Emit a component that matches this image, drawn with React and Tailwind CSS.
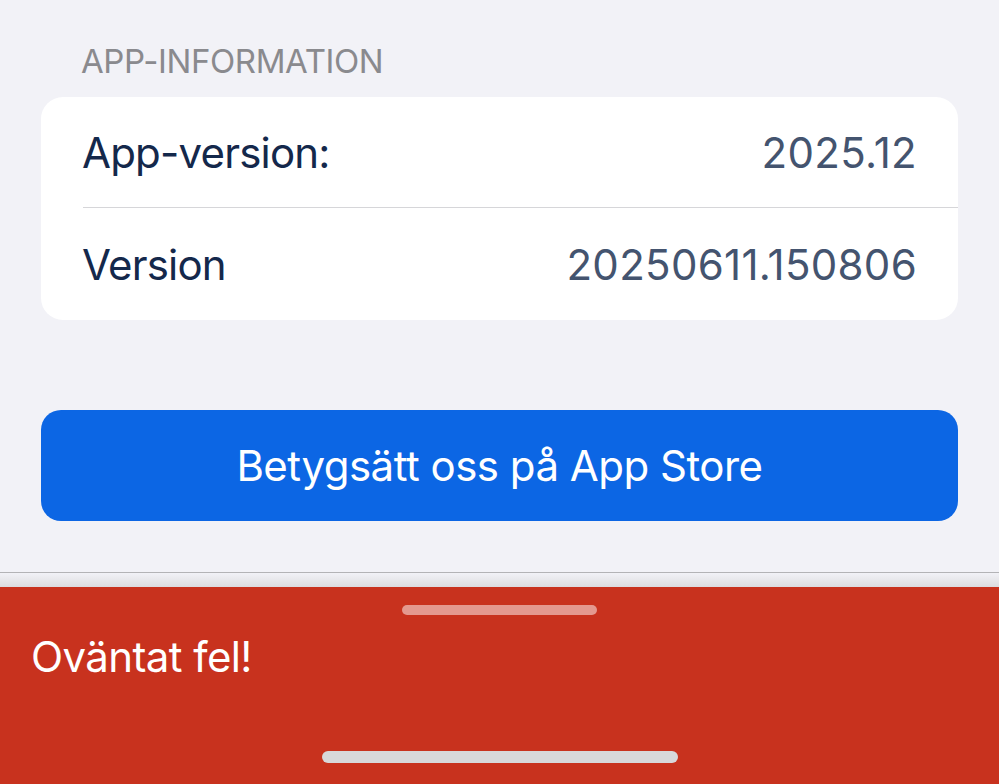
import React from 'react';

const rows = [
  { label: 'App-version:', value: '2025.12' },
  { label: 'Version', value: '20250611.150806' },
];

export default function App() {
  return (
    <div className="h-[784px] w-full overflow-hidden bg-[#f2f2f7] flex flex-col font-['Inter',sans-serif]">
      {/* Settings content */}
      <div className="px-[41px] pt-[41px]">
        <h2 className="pl-[40px] h-[40px] leading-[40px] text-[33px] tracking-[-0.4px] text-[#8a8a8e]">
          APP-INFORMATION
        </h2>
        <div className="mt-[16px] bg-white rounded-[22px] overflow-hidden">
          {rows.map((row, i) => (
            <div key={i} className="pl-[42px]">
              <div
                className={`pr-[41px] flex items-center justify-between text-[42px] ${
                  i === 0 ? 'h-[111px] border-b border-[#d6d6d9]' : 'h-[112px]'
                }`}
              >
                <span className="-ml-[1px] text-[#14284b] tracking-[-0.8px]">{row.label}</span>
                <span className="text-[#44546f] tracking-[0.3px]">{row.value}</span>
              </div>
            </div>
          ))}
        </div>
        <button className="mt-[90px] w-full h-[111px] rounded-[20px] bg-[#0c66e4] text-white text-[42px] tracking-[-0.5px] flex items-center justify-center">
          Betygsätt oss på App Store
        </button>
      </div>

      <div className="flex-1" />

      {/* Error sheet */}
      <div className="border-t border-[#b3b3b6] h-[212px] flex flex-col">
        <div className="h-[14px] bg-gradient-to-b from-[#f2f2f7] to-[#dcdcdf]" />
        <div className="flex-1 bg-[#c8321e] flex flex-col">
          <div className="pt-[18px] flex justify-center">
            <div className="w-[195px] h-[10px] rounded-full bg-white/50" />
          </div>
          <p className="mt-[17px] pl-[31px] h-[50px] leading-[50px] text-[42px] tracking-[-0.6px] text-white">
            Oväntat fel!
          </p>
          <div className="flex-1" />
          <div className="pb-[21px] flex justify-center">
            <div className="w-[356px] h-[12px] rounded-full bg-[#d8d8da]" />
          </div>
        </div>
      </div>
    </div>
  );
}
